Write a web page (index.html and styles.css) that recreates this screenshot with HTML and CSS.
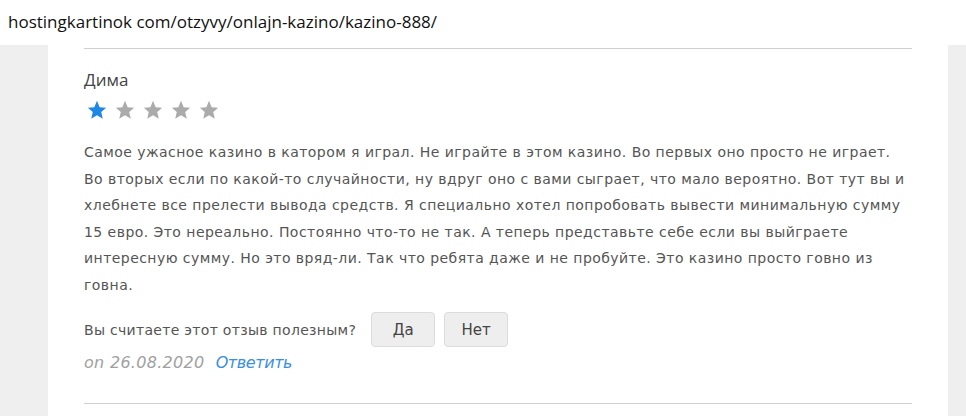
FILE: index.html
```html
<!DOCTYPE html>
<html lang="ru">
<head>
  <meta charset="UTF-8">
  <title>Казино 888 — отзывы</title>
  <link rel="stylesheet" href="styles.css">
</head>
<body>
  <div class="url-bar">hostingkartinok com/otzyvy/onlajn-kazino/kazino-888/</div>

  <div class="page">
    <div class="card">
      <div class="review">
        <div class="author">Дима</div>
        <div class="stars">
          <svg class="star on" viewBox="0 0 24 24"><path d="M12 2l2.9 6.9 7.1.6-5.4 4.7 1.7 7.3L12 17.6l-6.3 3.9 1.7-7.3L2 9.5l7.1-.6z"/></svg>
          <svg class="star" viewBox="0 0 24 24"><path d="M12 2l2.9 6.9 7.1.6-5.4 4.7 1.7 7.3L12 17.6l-6.3 3.9 1.7-7.3L2 9.5l7.1-.6z"/></svg>
          <svg class="star" viewBox="0 0 24 24"><path d="M12 2l2.9 6.9 7.1.6-5.4 4.7 1.7 7.3L12 17.6l-6.3 3.9 1.7-7.3L2 9.5l7.1-.6z"/></svg>
          <svg class="star" viewBox="0 0 24 24"><path d="M12 2l2.9 6.9 7.1.6-5.4 4.7 1.7 7.3L12 17.6l-6.3 3.9 1.7-7.3L2 9.5l7.1-.6z"/></svg>
          <svg class="star" viewBox="0 0 24 24"><path d="M12 2l2.9 6.9 7.1.6-5.4 4.7 1.7 7.3L12 17.6l-6.3 3.9 1.7-7.3L2 9.5l7.1-.6z"/></svg>
        </div>

        <p class="text">Самое ужасное казино в катором я играл. Не играйте в этом казино. Во первых оно просто не играет. Во вторых если по какой-то случайности, ну вдруг оно с вами сыграет, что мало вероятно. Вот тут вы и хлебнете все прелести вывода средств. Я специально хотел попробовать вывести минимальную сумму 15 евро. Это нереально. Постоянно что-то не так. А теперь представьте себе если вы выйграете интересную сумму. Но это вряд-ли. Так что ребята даже и не пробуйте. Это казино просто говно из говна.</p>

        <div class="helpful">
          <span>Вы считаете этот отзыв полезным?</span>
          <button class="vote">Да</button>
          <button class="vote">Нет</button>
        </div>

        <div class="meta">
          <span class="date">on 26.08.2020</span>
          <a class="reply" href="#">Ответить</a>
        </div>
      </div>
    </div>
  </div>
</body>
</html>
```

FILE: styles.css
```css
* {
  box-sizing: border-box;
}

body {
  margin: 0;
  background: #efefef;
  font-family: "DejaVu Sans", Verdana, sans-serif;
}

.url-bar {
  height: 45px;
  background: #ffffff;
  padding: 10px 0 0 8px;
  font-family: "Open Sans", "Segoe UI", sans-serif;
  font-size: 17px;
  color: #111;
}

.page {
  padding: 0 18px 0 48px;
}

.card {
  background: #ffffff;
  padding: 3px 36px 0;
  height: 371px;
}

.review {
  border-top: 1px solid #cfcfcf;
  border-bottom: 1px solid #cfcfcf;
  padding: 20px 0 31px;
}

.author {
  font-family: "Open Sans", "Segoe UI", sans-serif;
  font-size: 17px;
  color: #444;
  line-height: 22px;
}

.stars {
  display: flex;
  gap: 6px;
  margin: 8px 0 0 2px;
}

.star {
  width: 22px;
  height: 22px;
  fill: #ababab;
}

.star.on {
  fill: #1e88e5;
}

.text {
  margin: 18px 0 0;
  font-size: 14px;
  letter-spacing: 0.45px;
  line-height: 26.5px;
  color: #555;
}

.helpful {
  display: flex;
  align-items: center;
  gap: 9px;
  margin-top: 14px;
  font-size: 14px;
  letter-spacing: 0.3px;
  color: #555;
}

.helpful span {
  margin-right: 6px;
}

.vote {
  width: 64px;
  height: 35px;
  background: #eeeeee;
  border: 1px solid #dcdcdc;
  border-radius: 4px;
  font-family: "DejaVu Sans", Verdana, sans-serif;
  font-size: 15px;
  color: #444;
}

.meta {
  margin-top: 6px;
  font-size: 16px;
  font-style: italic;
}

.date {
  color: #a0a0a0;
  letter-spacing: 0.3px;
  margin-right: 6px;
}

.reply {
  color: #3a8fe0;
  letter-spacing: -0.4px;
  text-decoration: none;
}
```
